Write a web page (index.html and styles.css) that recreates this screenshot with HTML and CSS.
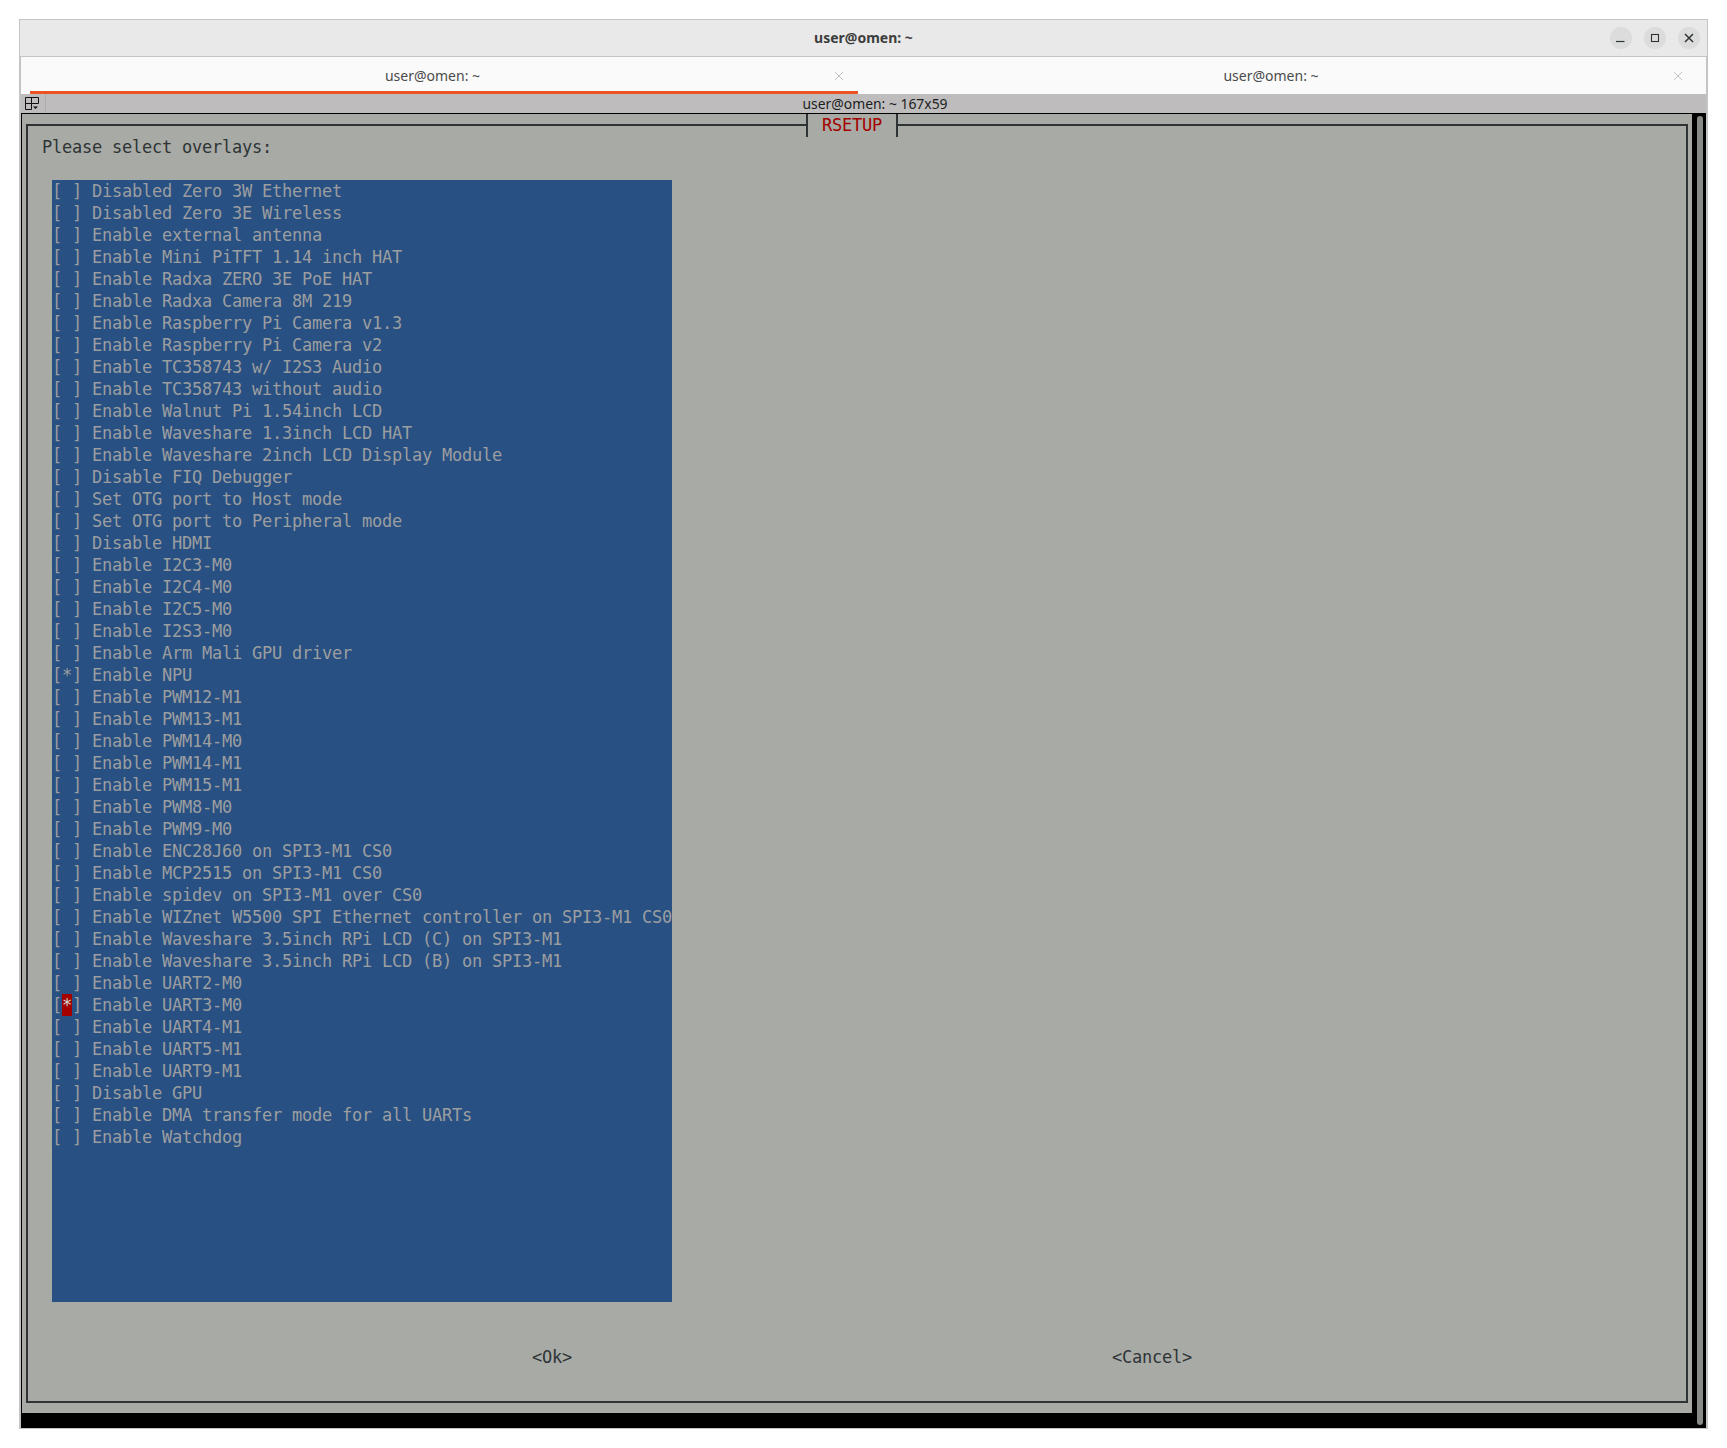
FILE: index.html
```html
<!DOCTYPE html>
<html lang="en">
<head>
<meta charset="utf-8">
<title>user@omen: ~</title>
<link rel="stylesheet" href="styles.css">
</head>
<body>
<div class="window">
  <header class="titlebar">
    <div class="title">user@omen: ~</div>
    <div class="controls">
      <span class="ctl"><svg width="10" height="10" viewBox="0 0 10 10"><path d="M0 8.5H8.5" stroke="#2e3436" stroke-width="1.2" fill="none"/></svg></span>
      <span class="ctl"><svg width="10" height="10" viewBox="0 0 10 10"><rect x="1.5" y="1.5" width="7" height="7" stroke="#2e3436" stroke-width="1.1" fill="none"/></svg></span>
      <span class="ctl"><svg width="10" height="10" viewBox="0 0 10 10"><path d="M1 1L9 9M9 1L1 9" stroke="#2e3436" stroke-width="1.5" fill="none"/></svg></span>
    </div>
  </header>
  <div class="inner">
    <nav class="tabs">
      <div class="tab active"><span class="tab-label">user@omen: ~</span><svg class="tab-x" width="8" height="8" viewBox="0 0 8 8"><path d="M0 0L8 8M8 0L0 8" stroke="#c4c4c4" stroke-width="1" fill="none"/></svg></div>
      <div class="tab second"><span class="tab-label">user@omen: ~</span><svg class="tab-x" width="8" height="8" viewBox="0 0 8 8"><path d="M0 0L8 8M8 0L0 8" stroke="#c4c4c4" stroke-width="1" fill="none"/></svg></div>
    </nav>
    <div class="termbar">
      <div class="split"><svg width="15" height="14" viewBox="0 0 15 14"><path d="M.5 .5H13.5V6.5H6.5V12.5H.5ZM.5 6.5H6.5M6.5 .5V6.5" stroke="#111" stroke-width="1" fill="none"/><path d="M8 9.5H13L10.5 12Z" fill="#111"/></svg></div>
      <div class="termtitle">user@omen: ~ 167x59</div>
    </div>
    <div class="terminal">
      <main class="dialog">
        <div class="frame">
          <div class="frame-title">RSETUP</div>
          <div class="prompt">Please select overlays:</div>
          <div class="list">
            <div class="row">[ ] Disabled Zero 3W Ethernet</div>
            <div class="row">[ ] Disabled Zero 3E Wireless</div>
            <div class="row">[ ] Enable external antenna</div>
            <div class="row">[ ] Enable Mini PiTFT 1.14 inch HAT</div>
            <div class="row">[ ] Enable Radxa ZERO 3E PoE HAT</div>
            <div class="row">[ ] Enable Radxa Camera 8M 219</div>
            <div class="row">[ ] Enable Raspberry Pi Camera v1.3</div>
            <div class="row">[ ] Enable Raspberry Pi Camera v2</div>
            <div class="row">[ ] Enable TC358743 w/ I2S3 Audio</div>
            <div class="row">[ ] Enable TC358743 without audio</div>
            <div class="row">[ ] Enable Walnut Pi 1.54inch LCD</div>
            <div class="row">[ ] Enable Waveshare 1.3inch LCD HAT</div>
            <div class="row">[ ] Enable Waveshare 2inch LCD Display Module</div>
            <div class="row">[ ] Disable FIQ Debugger</div>
            <div class="row">[ ] Set OTG port to Host mode</div>
            <div class="row">[ ] Set OTG port to Peripheral mode</div>
            <div class="row">[ ] Disable HDMI</div>
            <div class="row">[ ] Enable I2C3-M0</div>
            <div class="row">[ ] Enable I2C4-M0</div>
            <div class="row">[ ] Enable I2C5-M0</div>
            <div class="row">[ ] Enable I2S3-M0</div>
            <div class="row">[ ] Enable Arm Mali GPU driver</div>
            <div class="row">[*] Enable NPU</div>
            <div class="row">[ ] Enable PWM12-M1</div>
            <div class="row">[ ] Enable PWM13-M1</div>
            <div class="row">[ ] Enable PWM14-M0</div>
            <div class="row">[ ] Enable PWM14-M1</div>
            <div class="row">[ ] Enable PWM15-M1</div>
            <div class="row">[ ] Enable PWM8-M0</div>
            <div class="row">[ ] Enable PWM9-M0</div>
            <div class="row">[ ] Enable ENC28J60 on SPI3-M1 CS0</div>
            <div class="row">[ ] Enable MCP2515 on SPI3-M1 CS0</div>
            <div class="row">[ ] Enable spidev on SPI3-M1 over CS0</div>
            <div class="row">[ ] Enable WIZnet W5500 SPI Ethernet controller on SPI3-M1 CS0</div>
            <div class="row">[ ] Enable Waveshare 3.5inch RPi LCD (C) on SPI3-M1</div>
            <div class="row">[ ] Enable Waveshare 3.5inch RPi LCD (B) on SPI3-M1</div>
            <div class="row">[ ] Enable UART2-M0</div>
            <div class="row">[<span class="cursor">*</span>] Enable UART3-M0</div>
            <div class="row">[ ] Enable UART4-M1</div>
            <div class="row">[ ] Enable UART5-M1</div>
            <div class="row">[ ] Enable UART9-M1</div>
            <div class="row">[ ] Disable GPU</div>
            <div class="row">[ ] Enable DMA transfer mode for all UARTs</div>
            <div class="row">[ ] Enable Watchdog</div>
          </div>
          <div class="buttons">
            <span class="btn">&lt;Ok&gt;</span>
            <span class="btn">&lt;Cancel&gt;</span>
          </div>
        </div>
      </main>
      <div class="scroll"><div class="thumb"></div></div>
    </div>
  </div>
</div>
</body>
</html>
```
FILE: styles.css
```css
* { box-sizing: border-box; }
html, body { margin: 0; background: #fff; }
body { padding: 19px 0 0 19px; height: 1448px; overflow: hidden; }

.window {
  width: 1689px;
  height: 1410px;
  border: 1px solid #c4c4c4;
  background: #ebebeb;
  display: flex;
  flex-direction: column;
  font-family: "Noto Sans", "Open Sans", sans-serif;
}

.titlebar {
  height: 37px;
  flex: none;
  background: #e9e9e9;
  border-bottom: 1px solid #c4c4c4;
  display: flex;
  align-items: center;
  justify-content: center;
  position: relative;
  padding-bottom: 2px;
}
.title { font-size: 14px; font-weight: 700; color: #3d3d3d; }
.controls {
  position: absolute;
  right: 7px;
  top: 7px;
  display: flex;
  gap: 12px;
}
.ctl {
  width: 22px;
  height: 22px;
  border-radius: 50%;
  background: #dcdcdc;
  display: flex;
  align-items: center;
  justify-content: center;
}

.inner {
  flex: 1;
  min-height: 0;
  border-left: 1px solid #c4c4c4;
  border-right: 1px solid #c4c4c4;
  display: flex;
  flex-direction: column;
}

.tabs {
  height: 37px;
  flex: none;
  background: #fafafa;
  display: flex;
  gap: 10px;
  padding: 0 9px;
}
.tab {
  display: flex;
  align-items: center;
  padding: 3px 15px 0 0;
  color: #4a4a4a;
  border-bottom: 3px solid transparent;
}
.tab.active { width: 828px; border-bottom-color: #e95420; }
.tab.second { flex: 1; }
.tab-label { flex: 1; text-align: center; font-size: 14px; }
.tab-x { flex: none; }

.termbar {
  height: 19px;
  flex: none;
  background: #bebcbd;
  display: flex;
  align-items: center;
  position: relative;
}
.split {
  width: 25px;
  height: 19px;
  padding: 3px 0 0 4px;
  border-right: 1px solid #aeacad;
  flex: none;
}
.split svg { display: block; }
.termtitle {
  position: absolute;
  left: 0;
  right: 0;
  text-align: center;
  padding-left: 23px;
  font-size: 13.9px;
  color: #1c1c1c;
}

.terminal {
  flex: 1;
  min-height: 0;
  background: #000;
  padding: 1px 0 15px 1px;
  display: flex;
}
.dialog {
  width: 1670px;
  flex: none;
  background: #a8aaa5;
  padding: 10px 4px;
  font-family: "DejaVu Sans Mono", monospace;
  font-size: 17px;
  letter-spacing: -0.235px;
  line-height: 22px;
  color: #2e3436;
}
.frame {
  height: 100%;
  border: 2px solid #2e3436;
  position: relative;
  padding-top: 10px;
}
.frame-title {
  position: absolute;
  left: 778px;
  top: -12px;
  width: 92px;
  height: 23px;
  background: #a8aaa5;
  border-left: 2px solid #2e3436;
  border-right: 2px solid #2e3436;
  padding: 0 0 0 14px;
  color: #a40000;
}
.prompt { padding-left: 14px; }
.list {
  margin: 22px 0 0 24px;
  width: 620px;
  height: 1122px;
  background: #295082;
  color: #9b9ea0;
}
.row { height: 22px; white-space: pre; }
.cursor { display: inline-block; width: 10px; height: 22px; background: #a40000; color: #d3d7cf; vertical-align: top; }
.buttons {
  margin-top: 44px;
  padding-left: 504px;
  display: flex;
  gap: 540px;
}

.scroll {
  flex: 1;
  padding: 2px 3px 0 5px;
  margin-bottom: -12px;
}
.thumb {
  height: 100%;
  background: #888a85;
  border-radius: 3px;
}
```
